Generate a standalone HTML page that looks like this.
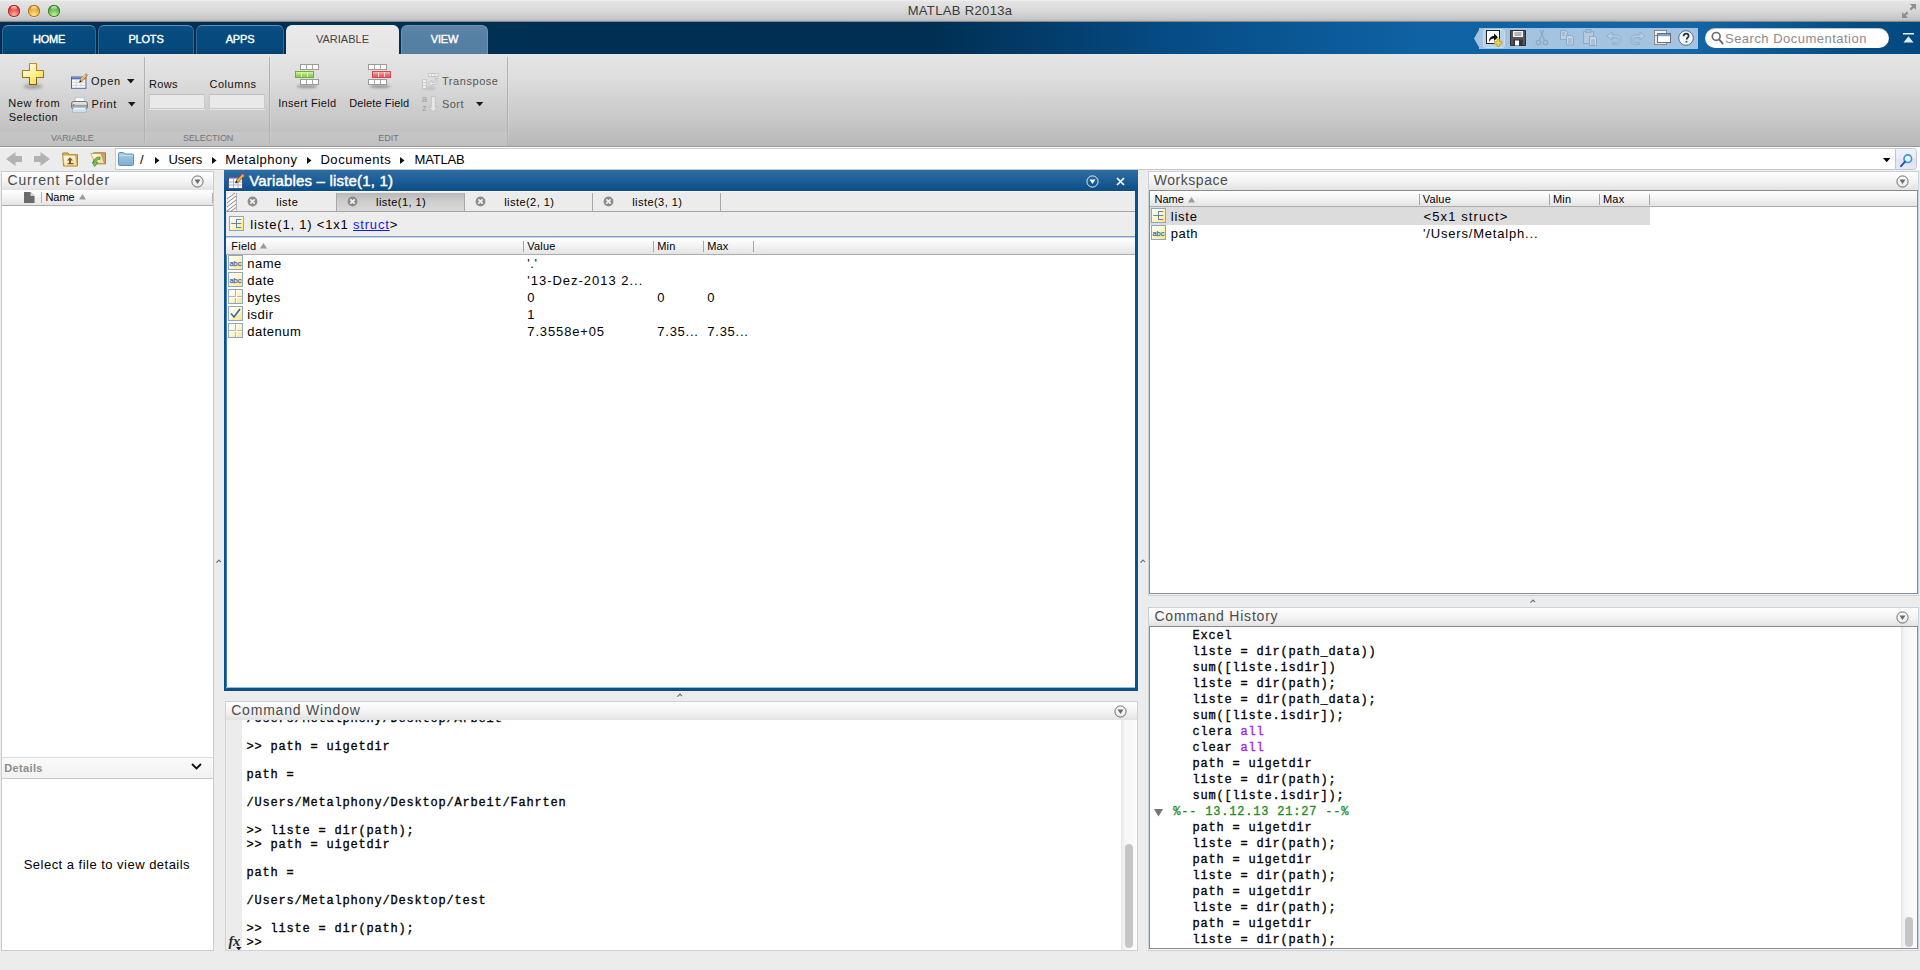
<!DOCTYPE html>
<html lang="en">
<head>
<meta charset="utf-8">
<title>MATLAB R2013a</title>
<style>
*{box-sizing:border-box;margin:0;padding:0}
html,body{width:1920px;height:970px;overflow:hidden;background:#ececec}
body{position:relative;font-family:"Liberation Sans",sans-serif;font-size:11px;color:#000}
div,span,a{position:absolute}
.t{white-space:nowrap;line-height:1}
svg{position:absolute;overflow:visible}
#titlebar{left:0;top:0;width:1920px;height:22px;background:linear-gradient(#f1f1f1,#e5e5e5 7%,#d9d9d9 50%,#c8c8c8 88%,#b9b9b9);border-bottom:1px solid #8a8a8a}
.tl{width:11.600px;height:11.600px;border-radius:50%;top:5.100px}
#strip{left:0;top:22px;width:1920px;height:32px;background:linear-gradient(90deg,#003055 0,#002f53 930px,#064f8a 1200px,#0f62a3 1420px,#1466a6 1690px,#0a5893 1780px,#044c84 1860px,#03497f 1920px)}
.tab{top:3px;height:29px;border-radius:6px 6px 0 0;background:linear-gradient(#0b5186,#054b7e 25%,#044a7c 78%,#033f6c);border:1px solid #2f6a99;border-top-color:#5f90ba;border-bottom:none;box-shadow:0 0 0 1px #00294a}
.tab .t,.tabsel .t{font-size:11px;top:8px;left:0;right:0;text-align:center}
.tab .t{color:#fff;-webkit-text-stroke-width:.4px;letter-spacing:-.2px}
.tabsel .t{top:9px}
.tabsel{top:3px;height:29px;border-radius:6px 6px 0 0;background:linear-gradient(#eaeaea,#e5e5e5)}
#ribbon{left:0;top:54px;width:1920px;height:93px;background:linear-gradient(#e5e5e5,#dedede 25%,#c6c6c6 75%,#b7b7b7);border-bottom:1px solid #9a9a9a}
.vsep{width:1px;top:3px;height:86px;background:#b2b2b2;box-shadow:1px 0 0 rgba(255,255,255,.15)}
.rl{font-size:11px;color:#111}
.seclab{font-size:9px;color:#747474}
.crumb{font-size:13px;top:5px}
.panel{background:#fff}
.ptitle{left:0;top:0;right:0;height:19px;background:linear-gradient(#fefefe,#f3f3f3 55%,#e1e1e1)}
.ptitle .t{font-size:14px;color:#4b4b4b;top:2px}
.hdr{background:linear-gradient(#ffffff,#f5f5f5 45%,#e4e4e4);border-bottom:1px solid #adadad}
.hdr .t{font-size:11px;top:3px}
.colsep{width:1px;top:2px;height:11px;background:#a6a6a6}
.r13{font-size:13px}
.mono{font-family:"Liberation Mono",monospace;font-size:12px;letter-spacing:.8px;white-space:pre;line-height:1;-webkit-text-stroke-width:.32px}
</style>
</head>
<body>
<div id="titlebar"><div class="tl" style="left:8.2px;background:radial-gradient(circle at 50% 85%,#ffb4aa 0,#ee4a42 55%,#9c2a26 100%);box-shadow:inset 0 0 0 .9px #9c2a26,0 .8px 0 rgba(255,255,255,.55)"><div style="left:3px;top:1.300px;width:5.600px;height:3.200px;border-radius:50%;background:linear-gradient(rgba(255,255,255,.8),rgba(255,255,255,.05))"></div></div><div class="tl" style="left:28.2px;background:radial-gradient(circle at 50% 85%,#ffe994 0,#eea62e 55%,#a4701e 100%);box-shadow:inset 0 0 0 .9px #a4701e,0 .8px 0 rgba(255,255,255,.55)"><div style="left:3px;top:1.300px;width:5.600px;height:3.200px;border-radius:50%;background:linear-gradient(rgba(255,255,255,.8),rgba(255,255,255,.05))"></div></div><div class="tl" style="left:48.2px;background:radial-gradient(circle at 50% 85%,#c8f2a6 0,#62b848 55%,#3a7a2c 100%);box-shadow:inset 0 0 0 .9px #3a7a2c,0 .8px 0 rgba(255,255,255,.55)"><div style="left:3px;top:1.300px;width:5.600px;height:3.200px;border-radius:50%;background:linear-gradient(rgba(255,255,255,.8),rgba(255,255,255,.05))"></div></div><div class="t" style="left:0;width:1920px;text-align:center;top:4px;font-size:13px;color:#3a3a3a;letter-spacing:.35px">MATLAB R2013a</div><svg style="left:1902px;top:4px" width="14" height="14" viewBox="0 0 14 14"><path d="M8 0h6v6l-2.2-2.2-2.6 2.6-1.6-1.6 2.6-2.6zM6 14H0V8l2.2 2.2 2.6-2.6 1.6 1.6-2.6 2.6z" fill="#8e8e8e"/></svg></div>
<div id="strip"><div class="tab" style="left:2px;width:94px"><div class="t">HOME</div></div><div class="tab" style="left:98px;width:96px"><div class="t">PLOTS</div></div><div class="tab" style="left:196px;width:88px"><div class="t">APPS</div></div><div class="tabsel" style="left:286px;width:113px"><div class="t" style="color:#444;letter-spacing:0">VARIABLE</div></div><div class="tab" style="left:401px;width:87px;background:linear-gradient(#5f86aa,#5780a5 30%,#557ea3);border-color:#6e93b5;box-shadow:none"><div class="t">VIEW</div></div><div style="left:1479px;top:6px;width:219px;height:21px;background:#a3c3e0"></div><svg style="left:1474px;top:6px" width="6" height="21" viewBox="0 0 6 21"><path d="M6 0L0 10.5 6 21z" fill="#a3c3e0"/></svg><div style="left:1483px;top:7px;width:22px;height:19px;border-radius:3px;background:#b7d1e8;border:1px solid #c9ddee"></div><svg style="left:1486px;top:8px" width="17" height="17" viewBox="0 0 17 17"><rect x=".5" y=".5" width="13" height="13" fill="#fff" stroke="#222" stroke-width="1"/><path d="M3 12c0-4 2-6 5-6V3.5l4 3.8-4 3.7V8.6C6 8.6 4.4 9.6 3 12z" fill="#111"/><path d="M11 9h2.6v2.4H16V14h-2.4v2.4H11V14H8.6v-2.6H11z" fill="#f4d23c" stroke="#b8941a" stroke-width=".7"/></svg><svg style="left:1510px;top:8px" width="16" height="16" viewBox="0 0 16 16"><path d="M.5.5h15v15H.5z" fill="#555" stroke="#2e2e2e"/><rect x="3" y="1" width="10" height="6" fill="#f2f2f2"/><rect x="4.5" y="2.5" width="7" height="1" fill="#777"/><rect x="4.5" y="4.5" width="7" height="1" fill="#777"/><rect x="3.5" y="9.5" width="9" height="6" fill="#333"/><rect x="5" y="10.5" width="4" height="5" fill="#fff"/></svg><svg style="left:1535px;top:8px" width="14" height="16" viewBox="0 0 14 16"><path d="M9 0L4.5 10M5 0l4.5 10" stroke="#8fa9c4" stroke-width="1.3" fill="none"/><circle cx="3.5" cy="12.5" r="2.2" fill="none" stroke="#8fa9c4" stroke-width="1.3"/><circle cx="10.5" cy="12.5" r="2.2" fill="none" stroke="#8fa9c4" stroke-width="1.3"/></svg><svg style="left:1560px;top:8px" width="14" height="16" viewBox="0 0 14 16"><path d="M.5.5h5l2 2v7h-7z" fill="#b9cee2" stroke="#8fa9c4"/><path d="M6.5 5.5h5l2 2v7.5h-7z" fill="#c3d5e7" stroke="#8fa9c4"/><path d="M8 9h4M8 11h4M8 13h4M2 3h3M2 5h3" stroke="#8fa9c4"/></svg><svg style="left:1583px;top:7px" width="15" height="17" viewBox="0 0 15 17"><path d="M.5 2.5h10v12H.5z" fill="#b4cadf" stroke="#8fa9c4"/><rect x="3" y=".5" width="5" height="3" fill="#a6bed6" stroke="#8fa9c4"/><path d="M6.5 7.5h5l2 2v7h-7z" fill="#c6d8e9" stroke="#8fa9c4"/><path d="M8 11h4M8 13h4M8 15h4" stroke="#8fa9c4"/></svg><svg style="left:1606px;top:9px" width="16" height="14" viewBox="0 0 16 14"><path d="M6 .8L.8 5 6 9.2V6.6h4.2c2 0 3 1 3 2.6s-1 2.6-3 2.6H6.5v1.6h4c3 0 4.7-1.700 4.700-4.200S13.500 4 10.500 4H6z" fill="#b5cbe0" stroke="#8fa9c4" stroke-width=".9"/></svg><svg style="left:1630px;top:9px" width="16" height="14" viewBox="0 0 16 14"><path d="M10 .8L15.200 5 10 9.2V6.6H5.800c-2 0-3 1-3 2.6s1 2.6 3 2.6H9.500v1.600h-4C2.500 13.400.8 11.700.8 9.200S2.500 4 5.500 4H10z" fill="#b5cbe0" stroke="#8fa9c4" stroke-width=".9"/></svg><svg style="left:1654px;top:8px" width="17" height="16" viewBox="0 0 17 16"><rect x=".5" y=".5" width="12" height="9" fill="#f2f2f2" stroke="#8a8a8a"/><rect x=".5" y="5.500" width="12" height="9" fill="#e6e6e6" stroke="#8a8a8a"/><rect x="3.500" y="3.500" width="13" height="9" fill="#fff" stroke="#6f6f6f"/><rect x="4" y="4" width="12" height="2.200" fill="#6ea4d8"/></svg><svg style="left:1678px;top:8px" width="16" height="16" viewBox="0 0 16 16"><circle cx="8" cy="8" r="7.300" fill="#f4f6f8" stroke="#5d6f82" stroke-width="1"/><path d="M5.600 6.200c0-1.600 1.100-2.500 2.500-2.500s2.500.9 2.500 2.200c0 1.700-2 1.800-2 3.600" fill="none" stroke="#1f2d3d" stroke-width="1.700"/><circle cx="8.500" cy="11.800" r="1.050" fill="#2f62a0"/></svg><div style="left:1705px;top:6px;width:184px;height:20px;border-radius:10px;background:#fff;box-shadow:inset 0 1px 1px rgba(0,0,0,.25)"></div><svg style="left:1711px;top:9px" width="13" height="14" viewBox="0 0 13 14"><circle cx="5.2" cy="5.4" r="3.9" fill="none" stroke="#6d6d6d" stroke-width="1.7"/><path d="M8 8.4l3.6 4" stroke="#6d6d6d" stroke-width="2" stroke-linecap="round"/></svg><div class="t" style="left:1725px;top:9.600px;font-size:13px;color:#8b8b8b;letter-spacing:.48px">Search Documentation</div><svg style="left:1903px;top:11.300px" width="11" height="10" viewBox="0 0 11 10"><rect x="0" y="0" width="11" height="1.500" fill="#e8eef5"/><path d="M5.500 3.200L10.500 9.500H.5z" fill="#dfe9f3"/></svg></div>
<div id="ribbon"><div style="left:0;top:78px;width:507px;height:14px;background:linear-gradient(#c6c6c6,#c0c0c0)"></div><div class="vsep" style="left:144px"></div><div class="vsep" style="left:269px"></div><div class="vsep" style="left:507px"></div><svg style="left:21px;top:8px" width="24" height="28" viewBox="0 0 24 28"><ellipse cx="12" cy="24.500" rx="9.500" ry="2.600" fill="rgba(0,0,0,.25)" style="filter:blur(1.600px)"/><defs><linearGradient id="gp" x1="0" y1="0" x2="1" y2="1"><stop offset="0" stop-color="#fffef0"/><stop offset=".35" stop-color="#fff6b8"/><stop offset=".7" stop-color="#fde66a"/><stop offset="1" stop-color="#fbd234"/></linearGradient><linearGradient id="gps" x1="0" y1="0" x2="0" y2="1"><stop offset="0" stop-color="#bb932e"/><stop offset="1" stop-color="#7c5c10"/></linearGradient></defs><path d="M8.500 1.500h7v7h7v7h-7v7h-7v-7h-7v-7h7z" fill="url(#gp)" stroke="url(#gps)" stroke-width="1.100" stroke-linejoin="round"/></svg><div class="t rl" style="left:8.3px;top:44.3px;letter-spacing:.6px">New from</div><div class="t rl" style="left:8.8px;top:58.4px;letter-spacing:.45px">Selection</div><svg style="left:70.500px;top:18.500px" width="17" height="17" viewBox="0 0 17 17"><rect x=".5" y="4" width="14.400" height="11.300" fill="#f8fbff" stroke="#4a66b0"/><rect x="1" y="4.300" width="13.400" height="2.100" fill="#5a78c2"/><path d="M1 9.300h13.400M1 12.300h13.400" stroke="#dccdb6" stroke-width=".9"/><path d="M5.300 6.500v8.500M10 6.500v8.500" stroke="#ccd6ea" stroke-width="1"/><path d="M8.500 9.200l1-2.700 4.800-5.200L16 3l-4.800 5.200z" fill="#f6b53c" stroke="#8a5a14" stroke-width=".6"/><path d="M10 6.200l4.300-4.700" stroke="#fde9a8" stroke-width=".8"/><path d="M14.300 1.300l.9-.9 1.700 1.700-.9.900z" fill="#f0a2ac" stroke="#a86068" stroke-width=".4"/><path d="M8.300 9.500l.9-2.300 1.400 1.300z" fill="#1a1a1a"/></svg><div class="t rl" style="left:91.1px;top:21.7px;letter-spacing:.7px">Open</div><svg style="left:126.5px;top:25.2px" width="7.5" height="4.5" viewBox="0 0 7.5 4.5"><path d="M0 0h7.5L3.75 4.5z" fill="#1a1a1a"/></svg><svg style="left:70.500px;top:42.500px" width="17" height="17" viewBox="0 0 17 17"><defs><linearGradient id="gpr" x1="0" y1="0" x2="0" y2="1"><stop offset="0" stop-color="#f6f6f6"/><stop offset=".45" stop-color="#d2d2d2"/><stop offset=".5" stop-color="#9a9a9a"/><stop offset="1" stop-color="#c8c8c8"/></linearGradient></defs><rect x="4.200" y=".8" width="9" height="4.500" fill="#fff" stroke="#b4c2d0" stroke-width=".8"/><rect x=".7" y="4.600" width="15.600" height="7.300" rx="1.600" fill="url(#gpr)" stroke="#5c5c5c" stroke-width=".9"/><circle cx="2.800" cy="7.600" r=".6" fill="#555"/><path d="M2.300 10.300h12.400l.9 4.800H1.400z" fill="#eaf3fb" stroke="#96b0c8" stroke-width=".8"/><path d="M2 13.200h13" stroke="#c4dcf0" stroke-width="1.200"/></svg><div class="t rl" style="left:91.6px;top:45.3px;letter-spacing:.5px">Print</div><svg style="left:127.5px;top:48.4px" width="7.5" height="4.5" viewBox="0 0 7.5 4.5"><path d="M0 0h7.5L3.75 4.5z" fill="#1a1a1a"/></svg><div class="t rl" style="left:149px;top:24.7px;letter-spacing:.3px">Rows</div><div class="t rl" style="left:209.4px;top:24.7px;letter-spacing:.55px">Columns</div><div style="left:149px;top:39.5px;width:56px;height:15.5px;background:#e9e9e9;border:1px solid #c9c9c9;border-top-color:#bdbdbd;box-shadow:0 1px 0 rgba(255,255,255,.5)"></div><div style="left:209px;top:39.5px;width:56px;height:15.5px;background:#e9e9e9;border:1px solid #c9c9c9;border-top-color:#bdbdbd;box-shadow:0 1px 0 rgba(255,255,255,.5)"></div><div class="t seclab" style="left:51px;top:80px;letter-spacing:-.1px">VARIABLE</div><div class="t seclab" style="left:183px;top:80px;letter-spacing:-.08px">SELECTION</div><div class="t seclab" style="left:378.2px;top:80px;letter-spacing:0">EDIT</div><svg style="left:294.5px;top:10px" width="26" height="25" viewBox="0 0 26 25"><defs><linearGradient id="gg" x1="0" y1="0" x2="0" y2="1"><stop offset="0" stop-color="#e6f7c8"/><stop offset=".5" stop-color="#a6dc68"/><stop offset="1" stop-color="#84c944"/></linearGradient><linearGradient id="gr" x1="0" y1="0" x2="0" y2="1"><stop offset="0" stop-color="#fbc6c2"/><stop offset=".5" stop-color="#f07472"/><stop offset="1" stop-color="#e65050"/></linearGradient></defs><ellipse cx="12" cy="22.500" rx="10.500" ry="1.800" fill="rgba(0,0,0,.28)" style="filter:blur(1.300px)"/><rect x="5.5" y="0.5" width="18" height="5" fill="#fdfdfd" stroke="#9a9a9a" stroke-width="1"/><path d="M11.5 1v4M17.5 1v4" stroke="#a8a8a8" stroke-width="1"/><rect x="0.5" y="7.5" width="18" height="6" fill="url(#gg)" stroke="#72ae3a" stroke-width="1"/><path d="M6.5 8v5M12.5 8v5" stroke="#eef9dc" stroke-width="1"/><rect x="5.5" y="15.5" width="18" height="5" fill="#fdfdfd" stroke="#9a9a9a" stroke-width="1"/><path d="M11.5 16v4M17.5 16v4" stroke="#a8a8a8" stroke-width="1"/></svg><div class="t rl" style="left:278.2px;top:44.3px;letter-spacing:.32px">Insert Field</div><svg style="left:367.5px;top:10px" width="26" height="25" viewBox="0 0 26 25"><defs><linearGradient id="gg" x1="0" y1="0" x2="0" y2="1"><stop offset="0" stop-color="#e6f7c8"/><stop offset=".5" stop-color="#a6dc68"/><stop offset="1" stop-color="#84c944"/></linearGradient><linearGradient id="gr" x1="0" y1="0" x2="0" y2="1"><stop offset="0" stop-color="#fbc6c2"/><stop offset=".5" stop-color="#f07472"/><stop offset="1" stop-color="#e65050"/></linearGradient></defs><ellipse cx="12" cy="22.500" rx="10.500" ry="1.800" fill="rgba(0,0,0,.28)" style="filter:blur(1.300px)"/><rect x="0.5" y="0.5" width="18" height="5" fill="#fdfdfd" stroke="#9a9a9a" stroke-width="1"/><path d="M6.5 1v4M12.5 1v4" stroke="#a8a8a8" stroke-width="1"/><rect x="4.5" y="7.5" width="18" height="6" fill="url(#gr)" stroke="#cf4a4a" stroke-width="1"/><path d="M10.5 8v5M16.5 8v5" stroke="#fde4e4" stroke-width="1"/><rect x="0.5" y="15.5" width="18" height="5" fill="#fdfdfd" stroke="#9a9a9a" stroke-width="1"/><path d="M6.5 16v4M12.5 16v4" stroke="#a8a8a8" stroke-width="1"/></svg><div class="t rl" style="left:349.3px;top:44.3px;letter-spacing:.1px">Delete Field</div><svg style="left:421.500px;top:19px" width="17" height="17" viewBox="0 0 17 17"><ellipse cx="7" cy="15.400" rx="7" ry="1.200" fill="rgba(0,0,0,.16)" style="filter:blur(1px)"/><rect x="6.600" y=".6" width="9.400" height="3" fill="#f4f4f4" stroke="#c4c4c4" stroke-width=".9"/><path d="M9.700 .6v3M12.900 .6v3" stroke="#c4c4c4" stroke-width=".9"/><rect x=".6" y="6.600" width="3.600" height="9" fill="#f4f4f4" stroke="#c4c4c4" stroke-width=".9"/><path d="M.6 9.600h3.600M.6 12.600h3.600" stroke="#c4c4c4" stroke-width=".9"/><path d="M13.300 5.400h2v3.200c0 2-1 3-3 3H10v2L6 10.400l4-3.100v2h2.300c.7 0 1-.3 1-1z" fill="#e4e4e4" stroke="#bcbcbc" stroke-width=".8"/></svg><div class="t rl" style="left:442px;top:21.7px;color:#565656;letter-spacing:.55px">Transpose</div><svg style="left:420.800px;top:42px" width="17" height="17" viewBox="0 0 17 17"><path d="M10.300 .5h4v10.700h2.200l-4.200 4.600-4.200-4.600h2.200z" fill="#e6e6e6" stroke="#bdbdbd" stroke-width=".8"/></svg><div class="t" style="left:421.8px;top:39.5px;font-size:9.500px;color:#9e9e9e">a</div><div class="t" style="left:422px;top:49.4px;font-size:9.500px;color:#9e9e9e">z</div><div class="t rl" style="left:442px;top:45.3px;color:#565656;letter-spacing:.45px">Sort</div><svg style="left:475.5px;top:48.3px" width="7.3" height="4.2" viewBox="0 0 7.3 4.2"><path d="M0 0h7.3L3.65 4.2z" fill="#1a1a1a"/></svg></div>
<div style="left:0;top:147px;width:1920px;height:1px;background:#fff"></div><div id="addr" style="left:0;top:148px;width:1920px;height:22px;background:#fff"><div style="left:0;top:0;width:115px;height:22px;background:#ececec"></div><svg style="left:6px;top:4px" width="16" height="14" viewBox="0 0 16 14"><path d="M9.500 0v4H16v6H9.500v4L0 7z" fill="#b2b2b2"/></svg><svg style="left:34px;top:4px" width="16" height="14" viewBox="0 0 16 14"><path d="M6.500 0v4H0v6h6.500v4L16 7z" fill="#b2b2b2"/></svg><svg style="left:62px;top:4px" width="17" height="15" viewBox="0 0 17 15"><defs><linearGradient id="gfo" x1="0" y1="0" x2="1" y2="1"><stop offset="0" stop-color="#fffdf2"/><stop offset="1" stop-color="#f3d98a"/></linearGradient></defs><path d="M.7 1h5.300l1.200 1.700h8.300v11.300H1.500z" fill="#d9b45e" stroke="#b0822a" stroke-width="1"/><path d="M1 3.200h12.500l1.700 10.600H2.200z" fill="url(#gfo)" stroke="#c09a3c" stroke-width=".6"/><path d="M8 5.200l3 3.300H9v2.500h2.500v1.300h-6V11H7V8.500H5z" fill="#7a5a2a"/></svg><svg style="left:90px;top:3.500px" width="17" height="16" viewBox="0 0 17 16"><path d="M3.500 .8h12v11h-12z" fill="#c9a46a" stroke="#a87c34" stroke-width="1"/><path d="M.8 1.500h10l3.700 10H5.300z" fill="url(#gfo)" stroke="#b99240" stroke-width=".7"/><path d="M10 5c-4.500 0-6 2.500-6 5.300H2l2.700 4.200 3.300-4.200H6c0-1.800 1.300-3 4-3z" fill="#7cc45a" stroke="#3a8a28" stroke-width=".7"/></svg><div style="left:115px;top:0;width:1780px;height:22px;background:#fff;border:1px solid #c9c9c9;border-right:none"></div><svg style="left:118px;top:4.300px" width="16" height="14" viewBox="0 0 16 14"><defs><linearGradient id="gf" x1="0" y1="0" x2="0" y2="1"><stop offset="0" stop-color="#a9cbe4"/><stop offset="1" stop-color="#7eaed2"/></linearGradient></defs><path d="M.5 1.500c0-.6.400-1 1-1h4l1.300 1.500h7.700c.6 0 1 .4 1 1v9.500c0 .6-.4 1-1 1h-13c-.6 0-1-.4-1-1z" fill="url(#gf)" stroke="#5f92bb" stroke-width="1"/><path d="M1 3.500h14" stroke="#c9dff0" stroke-width="1"/></svg><div class="t crumb" style="left:140px;top:5.3px;">/</div><svg style="left:154.6px;top:9.3px" width="4.5" height="7" viewBox="0 0 4.5 7"><path d="M0 0L4.5 3.5 0 7z" fill="#111"/></svg><div class="t crumb" style="left:168.4px;top:5.3px;">Users</div><svg style="left:211.5px;top:9.3px" width="4.5" height="7" viewBox="0 0 4.5 7"><path d="M0 0L4.5 3.5 0 7z" fill="#111"/></svg><div class="t crumb" style="left:225.3px;top:5.3px;letter-spacing:.5px">Metalphony</div><svg style="left:306.7px;top:9.3px" width="4.5" height="7" viewBox="0 0 4.5 7"><path d="M0 0L4.5 3.5 0 7z" fill="#111"/></svg><div class="t crumb" style="left:320.4px;top:5.3px;letter-spacing:.57px">Documents</div><svg style="left:400.4px;top:9.3px" width="4.5" height="7" viewBox="0 0 4.5 7"><path d="M0 0L4.5 3.5 0 7z" fill="#111"/></svg><div class="t crumb" style="left:414.6px;top:5.3px;letter-spacing:-.2px">MATLAB</div><svg style="left:1882.8px;top:9.9px" width="7.4" height="4.3" viewBox="0 0 7.4 4.3"><path d="M0 0h7.4L3.7 4.3z" fill="#000"/></svg><div style="left:1894.500px;top:0;width:22px;height:22px;background:linear-gradient(#f0f2f9,#e9ecf6 50%,#dde2f1 52%,#e6e9f5);border:1px solid #c4c6cf;border-radius:0 3.500px 3.500px 0"></div><svg style="left:1899px;top:4.500px" width="15" height="15" viewBox="0 0 15 15"><circle cx="8.800" cy="5.700" r="3.800" fill="#eef4fb" stroke="#3b8fdc" stroke-width="1.600"/><path d="M6 8.600L2 13.200" stroke="#2c56a6" stroke-width="2" stroke-linecap="round"/></svg></div>
<div class="panel" style="left:1px;top:171px;width:213px;height:780px;border:1px solid #c4ced9"><div class="ptitle" style="height:18px"><div class="t" style="left:5.4px;top:1.3px;letter-spacing:.88px">Current Folder</div></div><svg style="left:188.5px;top:2.5px" width="13" height="13" viewBox="0 0 13 13"><circle cx="6.5" cy="6.5" r="5.6" fill="none" stroke="#6b6b6b" stroke-width="1"/><path d="M3.500 4.500h6L6.500 9z" fill="#6b6b6b"/></svg><div class="hdr" style="left:0;top:18px;width:211px;height:16px"></div><svg style="left:22px;top:19.500px" width="11" height="11" viewBox="0 0 11 11"><path d="M0 0h6.500L10.500 4v7H0z" fill="#6a6a6a"/><path d="M6.500 0v4h4z" fill="#d8d8d8"/></svg><div style="left:38.500px;top:20px;width:1px;height:11px;background:#b0b0b0"></div><div class="t" style="left:43.4px;top:20.4px;font-size:11px">Name</div><svg style="left:77.2px;top:21.6px" width="7" height="5.500" viewBox="0 0 7 5.5"><path d="M3.500 0L7 5.500H0z" fill="#9a9a9a"/></svg><div style="left:210px;top:21px;width:1px;height:10px;background:#b0b0b0"></div><div style="left:0;top:584.500px;width:211px;height:22px;background:linear-gradient(#fbfbfb,#f1f1f1);border-top:1px solid #dcdcdc;border-bottom:1px solid #c9c9c9"></div><div class="t" style="left:2.3px;top:590.5px;font-size:11px;font-weight:bold;color:#8c8c8c;letter-spacing:.35px">Details</div><svg style="left:189px;top:591px" width="11" height="7" viewBox="0 0 11 7"><path d="M1 1l4.500 4.500L10 1" fill="none" stroke="#111" stroke-width="1.800"/></svg><div class="t" style="left:21.7px;top:686.4px;font-size:13px;letter-spacing:.48px">Select a file to view details</div></div>
<div style="left:224px;top:170px;width:914px;height:521px;background:#0d5089"></div><div style="left:224px;top:170px;width:914px;height:21px;background:linear-gradient(#2f6da3,#1f5f98 45%,#0b4e87 100%)"></div><svg style="left:228px;top:172.500px" width="17" height="17" viewBox="0 0 17 17"><rect x=".5" y="4" width="14" height="11.500" fill="#fdfdfd" stroke="#40589a"/><rect x="1" y="4" width="13" height="1.600" fill="#4f6db8"/><path d="M1 9h13M1 12h13M5.500 6v9M10 6v9" stroke="#a9b3cc" stroke-width="1"/><path d="M7.500 10l1-3 6-6.200 2 2-6 6.200z" fill="#f3b33a" stroke="#6a3d0a" stroke-width=".7"/><path d="M14.500.8l2 2-1.100 1.100-2-2z" fill="#e98a8a"/><path d="M7.500 10l.8-2.200 1.500 1.500z" fill="#222"/></svg><div class="t" style="left:249.2px;top:173.1px;font-size:15px;color:#fff;-webkit-text-stroke-width:.45px;letter-spacing:.18px">Variables – liste(1, 1)</div><svg style="left:1085.5px;top:174.5px" width="13" height="13" viewBox="0 0 13 13"><circle cx="6.5" cy="6.5" r="5.6" fill="none" stroke="#e9f0f7" stroke-width="1"/><path d="M3.500 4.500h6L6.500 9z" fill="#fff"/></svg><svg style="left:1115.500px;top:176.500px" width="9" height="9" viewBox="0 0 9 9"><path d="M1 1l7 7M8 1L1 8" stroke="#fff" stroke-width="1.700"/></svg><div style="left:226px;top:191px;width:1px;height:498px;background:#3f7db8"></div><div style="left:227px;top:191px;width:908px;height:496px;background:#fff"></div><div style="left:226px;top:686.600px;width:909px;height:1.900px;background:#8fbde8"></div><div style="left:226px;top:191px;width:909px;height:20px;background:#ececec;border-top:1px solid #f8f8f8"></div><div style="left:226px;top:211px;width:909px;height:1px;background:#a3a3a3"></div><svg style="left:227.500px;top:194px" width="7" height="16" viewBox="0 0 7 16"><rect width="7" height="16" fill="#fafafa"/><path d="M-1 5L7 -1M-1 9L8 2M-1 13L8 6M-1 17L8 10M2 18L8 13.500" stroke="#8a8a8a" stroke-width="1"/></svg><div style="left:236px;top:193px;width:1px;height:18px;background:#b5b5b5"></div><div style="left:337px;top:193px;width:127px;height:18px;background:linear-gradient(#b9b9b9,#cdcdcd 45%,#d9d9d9)"></div><div style="left:336px;top:193px;width:1px;height:18px;background:#a9a9a9"></div><div style="left:464px;top:193px;width:1px;height:18px;background:#a9a9a9"></div><div style="left:592px;top:193px;width:1px;height:18px;background:#a9a9a9"></div><div style="left:720px;top:193px;width:1px;height:18px;background:#a9a9a9"></div><svg style="left:246.5px;top:196.0px" width="11" height="11" viewBox="0 0 11 11"><circle cx="5.5" cy="5.5" r="4.900" fill="#8b8b8b"/><path d="M3.300 3.300l4.400 4.400M7.700 3.300L3.300 7.700" stroke="#f2f2f2" stroke-width="1.700"/></svg><div class="t" style="left:276.2px;top:197.1px;font-size:11px;letter-spacing:.5px">liste</div><svg style="left:346.5px;top:196.0px" width="11" height="11" viewBox="0 0 11 11"><circle cx="5.5" cy="5.5" r="4.900" fill="#8b8b8b"/><path d="M3.300 3.300l4.400 4.400M7.700 3.300L3.300 7.700" stroke="#f2f2f2" stroke-width="1.700"/></svg><div class="t" style="left:376px;top:197.1px;font-size:11px;letter-spacing:.45px">liste(1, 1)</div><svg style="left:474.5px;top:196.0px" width="11" height="11" viewBox="0 0 11 11"><circle cx="5.5" cy="5.5" r="4.900" fill="#8b8b8b"/><path d="M3.300 3.300l4.400 4.400M7.700 3.300L3.300 7.700" stroke="#f2f2f2" stroke-width="1.700"/></svg><div class="t" style="left:504.2px;top:197.1px;font-size:11px;letter-spacing:.45px">liste(2, 1)</div><svg style="left:602.5px;top:196.0px" width="11" height="11" viewBox="0 0 11 11"><circle cx="5.5" cy="5.5" r="4.900" fill="#8b8b8b"/><path d="M3.300 3.300l4.400 4.400M7.700 3.300L3.300 7.700" stroke="#f2f2f2" stroke-width="1.700"/></svg><div class="t" style="left:632.2px;top:197.1px;font-size:11px;letter-spacing:.45px">liste(3, 1)</div><div style="left:226px;top:212px;width:909px;height:24px;background:#ededed"></div><div style="left:226px;top:236px;width:909px;height:1px;background:#7f9fc4"></div><div style="left:226px;top:237px;width:909px;height:1px;background:#c5d3e4"></div><svg style="left:229px;top:216px" width="15" height="15" viewBox="0 0 15 15"><rect x=".5" y=".5" width="14" height="14" fill="url(#gy)" stroke="#8ea6c2"/><path d="M2.200 7.500h5.300M7.500 3.200v8.800M7.500 3.500h4.800M7.500 7.500h4.800M7.500 11.500h4.800" fill="none" stroke="#5f86ae" stroke-width="1"/></svg><div class="t r13" style="left:250.2px;top:218.2px;letter-spacing:.8px">liste(1, 1) &lt;1x1 <span style="position:static;color:#1a1ae6;text-decoration:underline">struct</span>&gt;</div><div class="hdr" style="left:226px;top:238px;width:909px;height:17px"></div><div class="t" style="left:231.2px;top:241.3px;font-size:11px;letter-spacing:.3px">Field</div><svg style="left:260px;top:243px" width="7" height="5.500" viewBox="0 0 7 5.5"><path d="M3.500 0L7 5.500H0z" fill="#9a9a9a"/></svg><div class="colsep" style="left:523px;top:241px"></div><div class="colsep" style="left:653px;top:241px"></div><div class="colsep" style="left:703px;top:241px"></div><div class="colsep" style="left:753px;top:241px"></div><div class="t" style="left:527.3px;top:241.3px;font-size:11px;letter-spacing:.2px">Value</div><div class="t" style="left:657.2px;top:241.3px;font-size:11px;letter-spacing:.2px">Min</div><div class="t" style="left:707.2px;top:241.3px;font-size:11px;letter-spacing:.2px">Max</div><svg style="left:228px;top:255.4px" width="15" height="15" viewBox="0 0 15 15"><defs><linearGradient id="gy" x1="0" y1="0" x2="1" y2="1"><stop offset="0" stop-color="#ffffff"/><stop offset=".4" stop-color="#fff9d8"/><stop offset="1" stop-color="#fbe37a"/></linearGradient></defs><rect x=".5" y=".5" width="14" height="14" fill="url(#gy)" stroke="#8ea6c2"/><text x="7.500" y="11" font-family="Liberation Sans,sans-serif" font-size="7.500" text-anchor="middle" fill="#3f6ea6" stroke="#3f6ea6" stroke-width=".25">abc</text></svg><div class="t r13" style="left:247.2px;top:256.6px;letter-spacing:.5px">name</div><div class="t r13" style="left:527.3px;top:256.6px;letter-spacing:0.5px">'.'</div><svg style="left:228px;top:272.4px" width="15" height="15" viewBox="0 0 15 15"><defs><linearGradient id="gy" x1="0" y1="0" x2="1" y2="1"><stop offset="0" stop-color="#ffffff"/><stop offset=".4" stop-color="#fff9d8"/><stop offset="1" stop-color="#fbe37a"/></linearGradient></defs><rect x=".5" y=".5" width="14" height="14" fill="url(#gy)" stroke="#8ea6c2"/><text x="7.500" y="11" font-family="Liberation Sans,sans-serif" font-size="7.500" text-anchor="middle" fill="#3f6ea6" stroke="#3f6ea6" stroke-width=".25">abc</text></svg><div class="t r13" style="left:247.2px;top:273.6px;letter-spacing:.5px">date</div><div class="t r13" style="left:527.3px;top:273.6px;letter-spacing:0.98px">'13-Dez-2013 2...</div><svg style="left:228px;top:289.4px" width="15" height="15" viewBox="0 0 15 15"><rect x=".5" y=".5" width="14" height="14" fill="url(#gy)" stroke="#8ea6c2"/><path d="M7.500 1v13M1 7.500h13" stroke="#a9b8c8" stroke-width="1"/><path d="M8.500 1v13M1 8.500h13" stroke="#ffffff" stroke-width="1"/></svg><div class="t r13" style="left:247.2px;top:290.6px;letter-spacing:.5px">bytes</div><div class="t r13" style="left:527.3px;top:290.6px;letter-spacing:0.5px">0</div><div class="t r13" style="left:657.3px;top:290.6px;letter-spacing:.75px">0</div><div class="t r13" style="left:707.3px;top:290.6px;letter-spacing:.75px">0</div><svg style="left:228px;top:306.4px" width="15" height="15" viewBox="0 0 15 15"><rect x=".5" y=".5" width="14" height="14" fill="url(#gy)" stroke="#8ea6c2"/><path d="M3 7.500l3 3.500 6-8" fill="none" stroke="#3569a8" stroke-width="1.600"/></svg><div class="t r13" style="left:247.2px;top:307.6px;letter-spacing:.5px">isdir</div><div class="t r13" style="left:527.3px;top:307.6px;letter-spacing:0.5px">1</div><svg style="left:228px;top:323.4px" width="15" height="15" viewBox="0 0 15 15"><rect x=".5" y=".5" width="14" height="14" fill="url(#gy)" stroke="#8ea6c2"/><path d="M7.500 1v13M1 7.500h13" stroke="#a9b8c8" stroke-width="1"/><path d="M8.500 1v13M1 8.500h13" stroke="#ffffff" stroke-width="1"/></svg><div class="t r13" style="left:247.2px;top:324.6px;letter-spacing:.5px">datenum</div><div class="t r13" style="left:527.3px;top:324.6px;letter-spacing:0.86px">7.3558e+05</div><div class="t r13" style="left:657.3px;top:324.6px;letter-spacing:.75px">7.35...</div><div class="t r13" style="left:707.3px;top:324.6px;letter-spacing:.75px">7.35...</div><svg style="left:677.2px;top:692.6px" width="6" height="5" viewBox="0 0 6 5"><path d="M1.500 4.300L3.600 2.200l1.700 1.900" fill="none" stroke="#ffffff" stroke-width="1.100"/><path d="M.8 3.300L3 1l1.700 1.800" fill="none" stroke="#6c6c6c" stroke-width="1.200" stroke-linecap="round"/></svg><svg style="left:216.2px;top:558.7px" width="6" height="5" viewBox="0 0 6 5"><path d="M1.500 4.300L3.600 2.200l1.700 1.900" fill="none" stroke="#ffffff" stroke-width="1.100"/><path d="M.8 3.300L3 1l1.700 1.800" fill="none" stroke="#6c6c6c" stroke-width="1.200" stroke-linecap="round"/></svg><svg style="left:1140.2px;top:558.7px" width="6" height="5" viewBox="0 0 6 5"><path d="M1.500 4.300L3.600 2.200l1.700 1.900" fill="none" stroke="#ffffff" stroke-width="1.100"/><path d="M.8 3.300L3 1l1.700 1.800" fill="none" stroke="#6c6c6c" stroke-width="1.200" stroke-linecap="round"/></svg>
<div class="panel" style="left:1148px;top:171px;width:771px;height:425px;border:1px solid #c9d3de;background:#f3f3f3"></div><div style="left:1149px;top:172px;width:769px;height:18px;background:linear-gradient(#fefefe,#f3f3f3 55%,#e2e2e2)"></div><div class="t" style="left:1153.7px;top:173.2px;font-size:14px;color:#4b4b4b;letter-spacing:.55px">Workspace</div><svg style="left:1895.5px;top:174.5px" width="13" height="13" viewBox="0 0 13 13"><circle cx="6.5" cy="6.5" r="5.6" fill="none" stroke="#6b6b6b" stroke-width="1"/><path d="M3.500 4.500h6L6.500 9z" fill="#6b6b6b"/></svg><div style="left:1149px;top:190px;width:769px;height:404px;background:#fff;border:1px solid #8c8c8c"></div><div class="hdr" style="left:1150px;top:191px;width:767px;height:16px"></div><div class="t" style="left:1154.5px;top:194.3px;font-size:11px">Name</div><svg style="left:1187.5px;top:196.5px" width="7" height="5.500" viewBox="0 0 7 5.5"><path d="M3.500 0L7 5.500H0z" fill="#9a9a9a"/></svg><div class="colsep" style="left:1419px;top:194px"></div><div class="colsep" style="left:1549px;top:194px"></div><div class="colsep" style="left:1599px;top:194px"></div><div class="colsep" style="left:1649px;top:194px"></div><div class="t" style="left:1422.7px;top:194.3px;font-size:11px;letter-spacing:.2px">Value</div><div class="t" style="left:1553px;top:194.3px;font-size:11px;letter-spacing:.2px">Min</div><div class="t" style="left:1603px;top:194.3px;font-size:11px;letter-spacing:.2px">Max</div><div style="left:1150px;top:207px;width:499.500px;height:17.500px;background:#dcdcdc"></div><svg style="left:1151.3px;top:207.7px" width="15" height="15" viewBox="0 0 15 15"><rect x=".5" y=".5" width="14" height="14" fill="url(#gy)" stroke="#8ea6c2"/><path d="M2.200 7.500h5.300M7.500 3.200v8.800M7.500 3.500h4.800M7.500 7.500h4.800M7.500 11.500h4.800" fill="none" stroke="#5f86ae" stroke-width="1"/></svg><div class="t r13" style="left:1170.7px;top:210px;letter-spacing:.8px">liste</div><div class="t r13" style="left:1423.6px;top:209.7px;letter-spacing:1.1px">&lt;5x1 struct&gt;</div><svg style="left:1151.3px;top:224.9px" width="15" height="15" viewBox="0 0 15 15"><defs><linearGradient id="gy" x1="0" y1="0" x2="1" y2="1"><stop offset="0" stop-color="#ffffff"/><stop offset=".4" stop-color="#fff9d8"/><stop offset="1" stop-color="#fbe37a"/></linearGradient></defs><rect x=".5" y=".5" width="14" height="14" fill="url(#gy)" stroke="#8ea6c2"/><text x="7.500" y="11" font-family="Liberation Sans,sans-serif" font-size="7.500" text-anchor="middle" fill="#3f6ea6" stroke="#3f6ea6" stroke-width=".25">abc</text></svg><div class="t r13" style="left:1170.7px;top:226.9px;letter-spacing:.5px">path</div><div class="t r13" style="left:1423px;top:226.7px;letter-spacing:.81px">'/Users/Metalph...</div><svg style="left:1530.2px;top:598.6px" width="6" height="5" viewBox="0 0 6 5"><path d="M1.500 4.300L3.600 2.200l1.700 1.900" fill="none" stroke="#ffffff" stroke-width="1.100"/><path d="M.8 3.300L3 1l1.700 1.800" fill="none" stroke="#6c6c6c" stroke-width="1.200" stroke-linecap="round"/></svg><div class="panel" style="left:1148px;top:607px;width:771px;height:344px;border:1px solid #c9d3de;background:#f3f3f3"></div><div style="left:1149px;top:608px;width:769px;height:18px;background:linear-gradient(#fefefe,#f3f3f3 55%,#e2e2e2)"></div><div class="t" style="left:1154.4px;top:609.2px;font-size:14px;color:#4b4b4b;letter-spacing:.8px">Command History</div><svg style="left:1895.5px;top:610.5px" width="13" height="13" viewBox="0 0 13 13"><circle cx="6.5" cy="6.5" r="5.6" fill="none" stroke="#6b6b6b" stroke-width="1"/><path d="M3.500 4.500h6L6.500 9z" fill="#6b6b6b"/></svg><div style="left:1149px;top:626px;width:769px;height:323px;background:#fff;border:1px solid #8c8c8c"></div><div style="left:1901px;top:627px;width:16px;height:321px;background:linear-gradient(90deg,#ededed,#f6f6f6 25%,#fbfbfb);border-left:1px solid #e6e6e6"></div><div style="left:1905px;top:917px;width:8px;height:30px;border-radius:4px;background:#c5c5c5"></div><div class="mono" style="left:1192.4px;top:630.3px;">Excel</div><div class="mono" style="left:1192.4px;top:646.3px;">liste = dir(path_data))</div><div class="mono" style="left:1192.4px;top:662.3px;">sum([liste.isdir])</div><div class="mono" style="left:1192.4px;top:678.3px;">liste = dir(path);</div><div class="mono" style="left:1192.4px;top:694.3px;">liste = dir(path_data);</div><div class="mono" style="left:1192.4px;top:710.3px;">sum([liste.isdir]);</div><div class="mono" style="left:1192.4px;top:726.3px;">clera <span style="position:static;color:#a020f0">all</span></div><div class="mono" style="left:1192.4px;top:742.3px;">clear <span style="position:static;color:#a020f0">all</span></div><div class="mono" style="left:1192.4px;top:758.3px;">path = uigetdir</div><div class="mono" style="left:1192.4px;top:774.3px;">liste = dir(path);</div><div class="mono" style="left:1192.4px;top:790.3px;">sum([liste.isdir]);</div><svg style="left:1154px;top:808.8px" width="9" height="7.500" viewBox="0 0 9 7.5"><path d="M0 0h9L4.500 7.500z" fill="#757575"/></svg><div class="mono" style="left:1173.2px;top:806.3px;color:#228b22">%-- 13.12.13 21:27 --%</div><div class="mono" style="left:1192.4px;top:822.3px;">path = uigetdir</div><div class="mono" style="left:1192.4px;top:838.3px;">liste = dir(path);</div><div class="mono" style="left:1192.4px;top:854.3px;">path = uigetdir</div><div class="mono" style="left:1192.4px;top:870.3px;">liste = dir(path);</div><div class="mono" style="left:1192.4px;top:886.3px;">path = uigetdir</div><div class="mono" style="left:1192.4px;top:902.3px;">liste = dir(path);</div><div class="mono" style="left:1192.4px;top:918.3px;">path = uigetdir</div><div class="mono" style="left:1192.4px;top:934.3px;">liste = dir(path);</div>
<div class="panel" style="left:225px;top:701px;width:913px;height:250px;border:1px solid #c9d3de;overflow:hidden"></div><div style="left:226px;top:702px;width:911px;height:18px;background:linear-gradient(#fefefe,#f3f3f3 55%,#e2e2e2)"></div><div class="t" style="left:231.2px;top:703.2px;font-size:14px;color:#4b4b4b;letter-spacing:.8px">Command Window</div><svg style="left:1113.5px;top:704.5px" width="13" height="13" viewBox="0 0 13 13"><circle cx="6.5" cy="6.5" r="5.6" fill="none" stroke="#6b6b6b" stroke-width="1"/><path d="M3.500 4.500h6L6.500 9z" fill="#6b6b6b"/></svg><div style="left:226px;top:720px;width:16px;height:230px;background:#ececec"></div><div style="left:1121px;top:720px;width:16px;height:230px;background:linear-gradient(90deg,#ededed,#f6f6f6 25%,#fbfbfb);border-left:1px solid #e6e6e6"></div><div style="left:1125px;top:844px;width:8px;height:104px;border-radius:4px;background:#c5c5c5"></div><div style="left:242px;top:720px;width:878px;height:230px;overflow:hidden"><div class="mono" style="left:4.400000000000006px;top:-6.7000000000000455px;">/Users/Metalphony/Desktop/Arbeit</div><div class="mono" style="left:4.400000000000006px;top:21.299999999999955px;">&gt;&gt; path = uigetdir</div><div class="mono" style="left:4.400000000000006px;top:49.299999999999955px;">path =</div><div class="mono" style="left:4.400000000000006px;top:77.29999999999995px;">/Users/Metalphony/Desktop/Arbeit/Fahrten</div><div class="mono" style="left:4.400000000000006px;top:105.29999999999995px;">&gt;&gt; liste = dir(path);</div><div class="mono" style="left:4.400000000000006px;top:119.29999999999995px;">&gt;&gt; path = uigetdir</div><div class="mono" style="left:4.400000000000006px;top:147.29999999999995px;">path =</div><div class="mono" style="left:4.400000000000006px;top:175.29999999999995px;">/Users/Metalphony/Desktop/test</div><div class="mono" style="left:4.400000000000006px;top:203.29999999999995px;">&gt;&gt; liste = dir(path);</div><div class="mono" style="left:4.400000000000006px;top:217.29999999999995px;">&gt;&gt;</div></div><div class="t" style="left:228.500px;top:934.300px;font-family:'Liberation Serif',serif;font-style:italic;font-weight:bold;font-size:14.500px;color:#2a2a2a;letter-spacing:-.3px">fx</div><svg style="left:236px;top:947px" width="5.500" height="3.300" viewBox="0 0 5.5 3.3"><path d="M0 0h5.500L2.750 3.300z" fill="#111"/></svg>
</body>
</html>
